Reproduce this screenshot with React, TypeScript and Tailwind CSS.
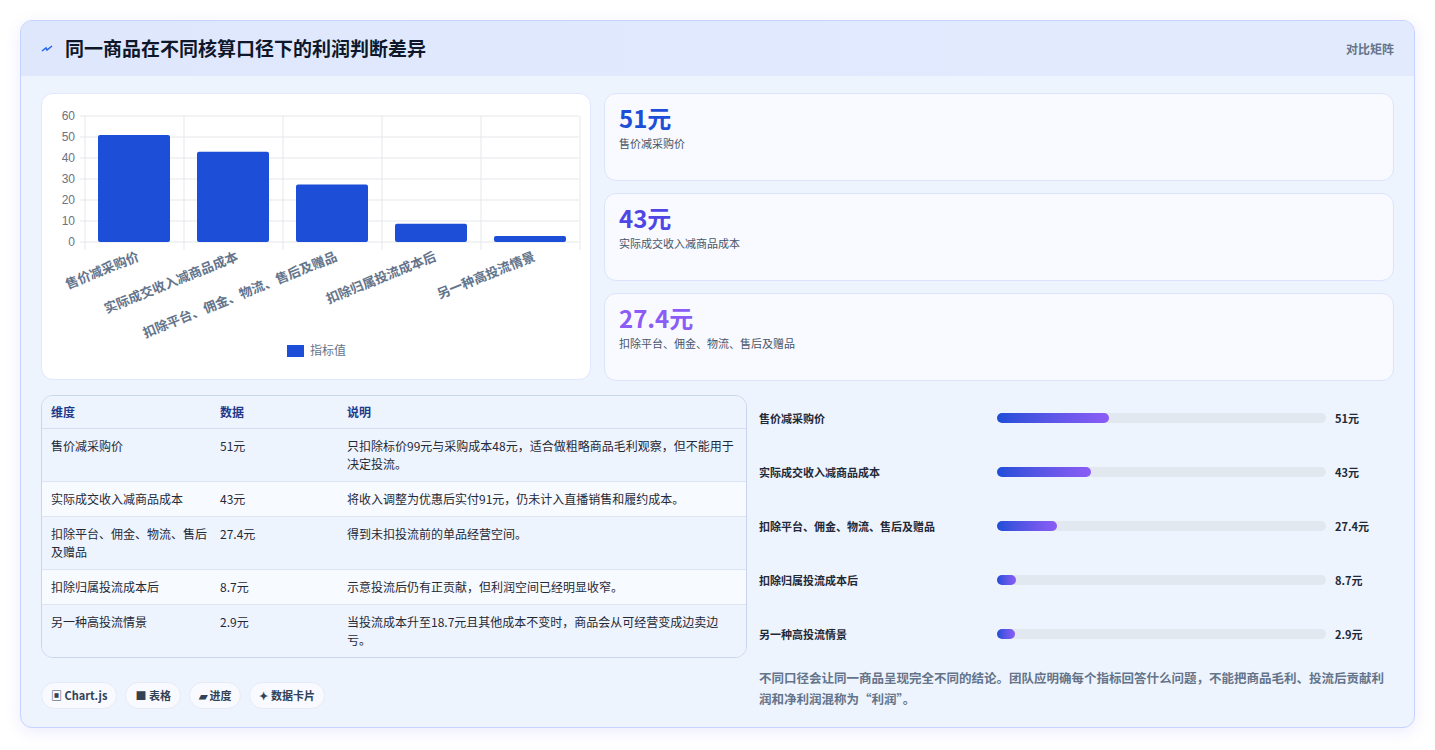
const F = { fontFamily: '"Noto Sans CJK SC","Noto Sans",sans-serif' };
const data = [
  { n: "售价减采购价", v: 51, c: "#1d4ed8", d: "只扣除标价99元与采购成本48元，适合做粗略商品毛利观察，但不能用于决定投流。" },
  { n: "实际成交收入减商品成本", v: 43, c: "#4f46e5", d: "将收入调整为优惠后实付91元，仍未计入直播销售和履约成本。" },
  { n: "扣除平台、佣金、物流、售后及赠品", v: 27.4, c: "#8b5cf6", d: "得到未扣投流前的单品经营空间。" },
  { n: "扣除归属投流成本后", v: 8.7, c: "", d: "示意投流后仍有正贡献，但利润空间已经明显收窄。" },
  { n: "另一种高投流情景", v: 2.9, c: "", d: "当投流成本升至18.7元且其他成本不变时，商品会从可经营变成边卖边亏。" },
];

function Chart() {
  const x0 = 43, w = 99, y0 = 148, k = 2.1;
  return (
    <svg width="549" height="286" viewBox="0 0 549 286">
      {[0, 10, 20, 30, 40, 50, 60].map((t) => (
        <g key={t}>
          <line x1={x0 - 5} x2={537} y1={y0 - t * k} y2={y0 - t * k} stroke="#e5e7eb" />
          <text x={x0 - 10} y={y0 - t * k + 4} textAnchor="end" fontSize="12" fill="#6b7280" fontFamily="Liberation Sans, sans-serif">{t}</text>
        </g>
      ))}
      {[0, 1, 2, 3, 4, 5].map((i) => (
        <line key={i} x1={x0 + i * w} x2={x0 + i * w} y1={y0 - 60 * k} y2={y0 + 8} stroke="#e5e7eb" />
      ))}
      {data.map((d, i) => (
        <g key={i}>
          <rect x={x0 + i * w + 13} y={y0 - d.v * k} width={72} height={d.v * k} rx="2" fill="#1d4ed8" />
          <text transform={`translate(${x0 + i * w + 55},${y0 + 18}) rotate(-22)`} textAnchor="end" fontSize="13" fontWeight="bold" fill="#64748b" style={F}>{d.n}</text>
        </g>
      ))}
      <rect x="245" y="251" width="17" height="12" fill="#1d4ed8" />
      <text x="268" y="261" fontSize="12" fill="#64748b" style={F}>指标值</text>
    </svg>
  );
}

export default function App() {
  return (
    <div className="min-h-screen bg-white p-5" style={F}>
      <div className="rounded-xl border border-[#c7d2fe] bg-[#eef4fe] overflow-hidden shadow-[0_4px_16px_rgba(99,102,241,0.12)]">
        <div className="flex items-center justify-between h-[55px] px-5 bg-gradient-to-r from-[#dfe7fd] to-[#e2ebfe]">
          <div className="flex items-center gap-3">
            <svg width="12" height="12" viewBox="0 0 12 12"><path d="M1 8 L5 5 L6 7 L11 3" stroke="#2563eb" strokeWidth="1.5" fill="none" /></svg>
            <h1 className="text-[19px] font-bold text-[#0f172a]">同一商品在不同核算口径下的利润判断差异</h1>
          </div>
          <span className="text-xs font-bold text-[#64748b]">对比矩阵</span>
        </div>
        <div className="px-5 pt-[17px] pb-[18px]">
          <div className="flex gap-[13px]">
            <div className="w-[550px] h-[287px] bg-white rounded-xl border border-[#e0e7ff]"><Chart /></div>
            <div className="flex-1 flex flex-col gap-3">
              {data.slice(0, 3).map((d, i) => (
                <div key={i} className="h-[88px] rounded-xl border border-[#dbe4fb] bg-[#f8faff] px-[14px] pt-[8px]">
                  <div className="text-[24px] font-bold leading-[32px]" style={{ color: d.c }}>{d.v}元</div>
                  <div className="text-[11px] text-[#475569] mt-[1px]">{d.n}</div>
                </div>
              ))}
            </div>
          </div>
          <div className="flex gap-3 mt-[14px]">
            <div className="w-[706px] shrink-0">
              <div className="rounded-xl border border-[#c9d5ec] overflow-hidden text-[12px]">
                <div className="flex bg-[#eef4fe] h-[33px] items-center font-bold text-[#1e3a8a] border-b border-[#d5def0]">
                  <div className="w-[178px] pl-[9px]">维度</div><div className="w-[127px]">数据</div><div>说明</div>
                </div>
                {data.map((d, i) => (
                  <div key={i} className={`flex py-[8px] leading-[18px] text-[#1f2937] border-b last:border-b-0 border-[#dde5f3] ${i % 2 ? "bg-[#f7faff]" : "bg-[#eef4fe]"}`}>
                    <div className="w-[178px] pl-[9px] pr-3">{d.n}</div>
                    <div className="w-[127px]">{d.v}元</div>
                    <div className="flex-1 pr-[10px]">{d.d}</div>
                  </div>
                ))}
              </div>
              <div className="flex gap-2 mt-6">
                {["▣ Chart.js", "■ 表格", "▰ 进度", "✦ 数据卡片"].map((t) => (
                  <span key={t} className="h-[27px] px-[9px] flex items-center rounded-full border border-[#e5eaf5] bg-[#f8faff] text-[11px] font-bold text-[#334155]">{t}</span>
                ))}
              </div>
            </div>
            <div className="flex-1 flex flex-col">
              <div className="flex flex-col gap-[36px] pt-[14px]">
                {data.map((d, i) => (
                  <div key={i} className="flex items-center h-[18px] text-[11px] font-bold text-[#1f2937]">
                    <div className="w-[238px]">{d.n}</div>
                    <div className="w-[329px] h-[10px] rounded-full bg-[#e2e8f0]">
                      <div className="h-full rounded-full bg-gradient-to-r from-[#1d4ed8] to-[#8b5cf6]" style={{ width: `${Math.max(d.v / 150 * 100, 5.5)}%` }} />
                    </div>
                    <div className="ml-[9px]">{d.v}元</div>
                  </div>
                ))}
              </div>
              <p className="mt-[24px] text-[12.5px] leading-[21px] font-bold text-[#64748b]">不同口径会让同一商品呈现完全不同的结论。团队应明确每个指标回答什么问题，不能把商品毛利、投流后贡献利润和净利润混称为“利润”。</p>
            </div>
          </div>
        </div>
      </div>
    </div>
  );
}
